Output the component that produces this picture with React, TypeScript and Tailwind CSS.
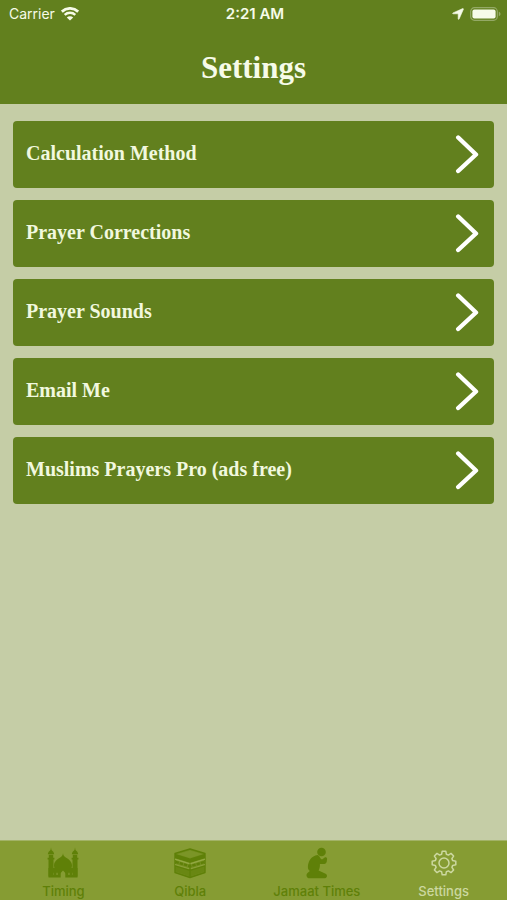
import React, { useState } from 'react';
import clsx from 'clsx';

interface Tab {
  label: string;
  icon: React.FC;
}

const menuItems: string[] = [
  'Calculation Method',
  'Prayer Corrections',
  'Prayer Sounds',
  'Email Me',
  'Muslims Prayers Pro (ads free)',
];

const WifiIcon = () => (
  <svg className="h-[14px] w-[18px]" viewBox="0 0 18 14" fill="none" aria-hidden="true">
    <path d="M.8 4.700A11.800 11.800 0 0 1 17.200 4.700" stroke="currentColor" strokeWidth="2.800" />
    <path d="M3.700 7.900A7.600 7.600 0 0 1 14.300 7.900" stroke="currentColor" strokeWidth="2.400" />
    <path d="M9 13.600 5.800 10.500a4.500 4.500 0 0 1 6.400 0Z" fill="currentColor" />
  </svg>
);

const LocationIcon = () => (
  <svg className="h-3 w-3" viewBox="0 0 12 12" fill="currentColor" aria-hidden="true">
    <path d="M11.300.7a.5.5 0 0 1 .1.600L7.100 11c-.2.500-.9.400-.9-.1V6.100a.3.300 0 0 0-.3-.3H1.100c-.5 0-.6-.7-.1-.9L10.700.6a.5.500 0 0 1 .6.100Z" stroke="currentColor" strokeWidth=".6" />
  </svg>
);

const BatteryIcon = () => (
  <svg className="h-[14px] w-[31px]" viewBox="0 0 31 14" fill="none" aria-hidden="true">
    <rect x=".7" y=".7" width="26.600" height="12.600" rx="3.800" stroke="#94a966" strokeWidth="1.200" />
    <rect x="2.400" y="2.400" width="23.200" height="9.200" rx="2" fill="currentColor" />
    <path d="M28.800 4.800c1.200.4 1.700 1.200 1.700 2.200s-.5 1.800-1.700 2.200Z" fill="#94a966" />
  </svg>
);

const ChevronIcon = () => (
  <svg className="h-10 w-6" viewBox="0 0 24 40" fill="none" aria-hidden="true">
    <path d="M3.200 3.500 21 20.500 3.200 37" stroke="currentColor" strokeWidth="4.400" strokeLinecap="round" strokeLinejoin="round" />
  </svg>
);

const MosqueIcon = () => (
  <svg className="h-8 w-9" viewBox="0 0 36 32" fill="currentColor" aria-hidden="true">
    {/* minarets */}
    <path d="m6 .5.5 2.500C8 4.200 8.900 5.300 9.200 7.200H2.800C3.100 5.300 4 4.200 5.500 3Z" />
    <path d="m30 .5.500 2.500c1.500 1.200 2.400 2.300 2.700 4.200h-6.400c.3-1.900 1.200-3 2.700-4.200Z" />
    <path d="M3.800 7.800h4.400v3h1.200v1.600h-.9v17.100h-5V12.400h-.9v-1.600h1.200Z" />
    <path d="M27.800 7.800h4.400v3h1.200v1.600h-.9v17.100h-5V12.400h-.9v-1.600h1.200Z" />
    {/* dome and prayer hall */}
    <path d="M18 6c.2 1.800.5 2.600 1.500 3.400 2.200 1.600 7.500 4.200 7.500 9 0 1.400-.4 2.600-1 3.600H10c-.6-1-1-2.200-1-3.600 0-4.800 5.300-7.400 7.500-9C17.500 8.600 17.800 7.800 18 6Z" />
    <path fillRule="evenodd" d="M3.500 21h29v9.500H20.300v-3.400c0-1.500-.9-2.200-2.300-3.500-1.400 1.300-2.300 2-2.300 3.500v3.400H3.500Zm4.200 4.800v2.200h1.100v-2.200Zm3.800 0v2.200h1.100v-2.200Zm11.900 0v2.200h1.100v-2.200Zm3.800 0v2.200h1.100v-2.200Z" />
  </svg>
);

const KaabaIcon = () => (
  <svg className="h-8 w-9" viewBox="0 0 36 32" strokeLinejoin="round" aria-hidden="true">
    <path d="M3 6.500 18 2l15 4.500v19L18 30.500l-15-5Z" fill="#759020" stroke="currentColor" strokeWidth="1.400" />
    <path d="M5.500 7.200 18 3.500l12.500 3.700L18 11Z" fill="#7b9527" />
    <path d="m3 6.800 15 4.700 15-4.700v4.400l-15 4.600-15-4.600Z" fill="currentColor" />
    <path d="m3 12.200 15 4.600 15-4.600" fill="none" stroke="#93a943" strokeWidth="1.300" />
    <path d="m3.500 14.900 14.500 4.400 14.500-4.400" fill="none" stroke="currentColor" strokeWidth="2.400" strokeDasharray="3.400 1" />
    <path d="m3 17.500 15 4.500 15-4.500" fill="none" stroke="#8ba03a" strokeWidth="1.300" />
    <path d="m3.500 19.200 14.500 4.400 14.500-4.400v5.300L18 29.500 3.500 24.500Z" fill="currentColor" fillOpacity=".55" />
    <path d="M18 16.500v13.500M3.500 19l14.500 4.400L32.500 19" fill="none" stroke="currentColor" strokeWidth="1.300" />
  </svg>
);

const PrayingIcon = () => (
  <svg className="h-8 w-9" viewBox="0 0 36 32" fill="currentColor" aria-hidden="true">
    <circle cx="22.500" cy="5" r="4.300" />
    <path d="M18.500 7.900c-6 .9-9.400 6-9.600 11.900-.1 2 .6 3.400 2 4.200l-2.400 2c-1.600 1.200-1.300 4.200.9 5.200H26c2.300-.4 2.700-3.600.6-4.500l-7-3.200c1.300-2.300 1.400-4.400 1.300-6.400l4.300-.1c1.400-.1 2.300-1 2.500-2.200l.4-2.900c0-1.600-1.700-2.200-2.700-1.200l-2.400 1.900c-1-.5-1.600-1.200-2-2.100-.3-.8-1.200-2.300-2.500-2.600Z" />
  </svg>
);

const GearIcon = () => (
  <svg className="h-8 w-9" viewBox="0 0 36 32" fill="none" stroke="currentColor" strokeWidth="1.500" strokeLinejoin="round" aria-hidden="true">
    <path d="M16.200 4.200h3.600l.6 3.100 2 .8 2.600-1.700 2.600 2.600-1.700 2.600.8 2 3.100.6v3.600l-3.100.6-.8 2 1.700 2.600-2.600 2.600-2.600-1.700-2 .8-.6 3.100h-3.600l-.6-3.100-2-.8L11 25.600 8.400 23l1.700-2.600-.8-2-3.100-.6v-3.600l3.100-.6.8-2L8.400 9 11 6.400l2.600 1.700 2-.8Z" />
    <circle cx="18" cy="16" r="5" />
  </svg>
);

const tabs: Tab[] = [
  { label: 'Timing', icon: MosqueIcon },
  { label: 'Qibla', icon: KaabaIcon },
  { label: 'Jamaat Times', icon: PrayingIcon },
  { label: 'Settings', icon: GearIcon },
];

const StatusBar: React.FC = () => (
  <div className="grid h-7 grid-cols-3 items-center pl-[9px] pr-[6px] font-[Inter,sans-serif] text-sm">
    <div className="flex items-center gap-[6px]">
      <span>Carrier</span>
      <WifiIcon />
    </div>
    <span className="text-center text-[15px] font-semibold">2:21 AM</span>
    <div className="flex items-center justify-end gap-[6px]">
      <LocationIcon />
      <BatteryIcon />
    </div>
  </div>
);

export default function App() {
  const [activeTab, setActiveTab] = useState('Settings');

  return (
    <div className="flex min-h-screen flex-col bg-[#c5cda6]">
      <header className="bg-[#62801e] pb-4 text-[#f6fbe9]">
        <StatusBar />
        <h1 className="pt-5 text-center font-['Palatino','Liberation_Serif',serif] text-[31px] font-bold leading-10">
          Settings
        </h1>
      </header>

      <main className="flex flex-1 flex-col gap-3 px-[13px] pb-4 pt-[17px]">
        {menuItems.map((item) => (
          <button
            key={item}
            type="button"
            className="flex h-[67px] items-center justify-between rounded bg-[#62801e] pb-px pl-[13px] pr-[15px] text-left text-[#f1f8df]"
          >
            <span className="pb-[3px] font-['Palatino','Liberation_Serif',serif] text-xl font-bold">{item}</span>
            <span className="text-white">
              <ChevronIcon />
            </span>
          </button>
        ))}
      </main>

      {/* Bottom tab bar */}
      <nav className="sticky bottom-0 flex h-[60px] border-t border-[#a2b267] bg-[#869c33]">
        {tabs.map(({ label, icon: Icon }) => (
          <button
            key={label}
            type="button"
            aria-current={activeTab === label ? 'page' : undefined}
            onClick={() => setActiveTab(label)}
            className={clsx(
              'flex flex-1 basis-0 flex-col items-center gap-1 pt-[6px]',
              activeTab === label ? 'text-[#ccd8a0]' : 'text-[#5f8008]'
            )}
          >
            <Icon />
            <span className="whitespace-nowrap font-[Inter,sans-serif] text-[13px] font-medium leading-4">{label}</span>
          </button>
        ))}
      </nav>
    </div>
  );
}
